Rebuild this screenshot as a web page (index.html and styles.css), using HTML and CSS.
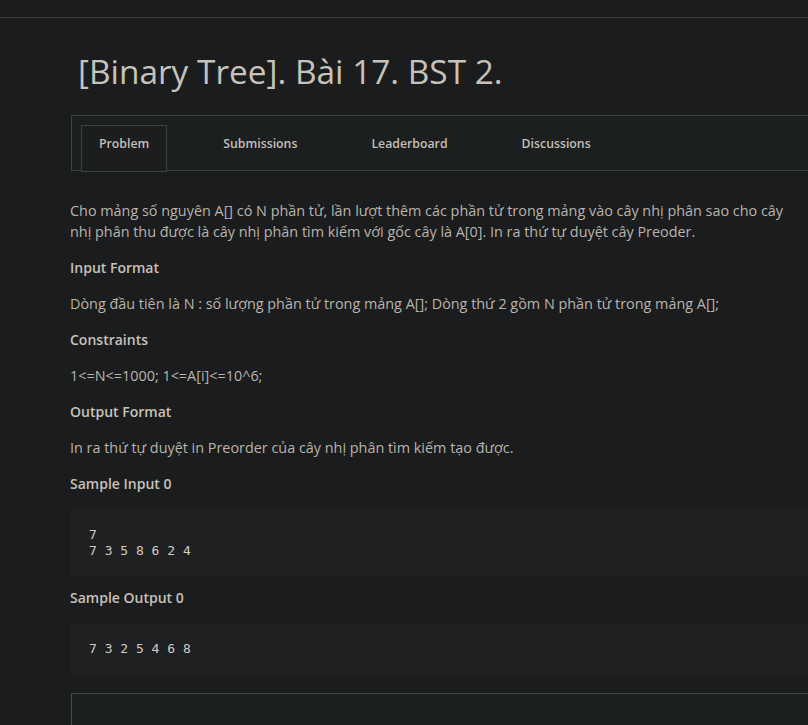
FILE: index.html
```html
<!DOCTYPE html>
<html lang="vi">
<head>
<meta charset="utf-8">
<title>[Binary Tree]. Bài 17. BST 2.</title>
<link rel="stylesheet" href="styles.css">
</head>
<body>
<div class="topbar"></div>
<main class="page">
  <h1 class="title">[Binary Tree]. Bài 17. BST 2.</h1>
  <nav class="tabs">
    <a class="tab active">Problem</a>
    <a class="tab">Submissions</a>
    <a class="tab">Leaderboard</a>
    <a class="tab">Discussions</a>
  </nav>
  <section class="statement">
    <p class="wrap">Cho mảng số nguyên A[] có N phần tử, lần lượt thêm các phần tử trong mảng vào cây nhị phân sao cho cây nhị phân thu được là cây nhị phân tìm kiếm với gốc cây là A[0]. In ra thứ tự duyệt cây Preoder.</p>
    <h3>Input Format</h3>
    <p>Dòng đầu tiên là N : số lượng phần tử trong mảng A[]; Dòng thứ 2 gồm N phần tử trong mảng A[];</p>
    <h3>Constraints</h3>
    <p>1&lt;=N&lt;=1000; 1&lt;=A[i]&lt;=10^6;</p>
    <h3>Output Format</h3>
    <p>In ra thứ tự duyệt in Preorder của cây nhị phân tìm kiếm tạo được.</p>
    <h3>Sample Input 0</h3>
    <pre class="code">7
7 3 5 8 6 2 4</pre>
    <h3>Sample Output 0</h3>
    <pre class="code last">7 3 2 5 4 6 8</pre>
  </section>
  <div class="editor"></div>
</main>
</body>
</html>
```
FILE: styles.css
```css
html, body {
  margin: 0;
  padding: 0;
  background: #1b1c1e;
  overflow: hidden;
}
body {
  font-family: "Open Sans", "Noto Sans", sans-serif;
  color: #b9b4ac;
  width: 808px;
  height: 725px;
}
.topbar {
  height: 17px;
  border-bottom: 1px solid #3c3d3f;
}
.page {
  margin-left: 70px;
  width: 800px;
}
.title {
  margin: 0;
  padding: 31px 0 0 8px;
  font-size: 33.4px;
  line-height: 44px;
  font-weight: 400;
  color: #c7c3bb;
  height: 66px;
}
.tabs {
  display: flex;
  gap: 38px;
  margin-left: 1px;
  padding: 9px 0 0 9px;
  box-sizing: border-box;
  height: 56px;
  background: #1c1f20;
  border: 1px solid #3e4142;
}
.tab {
  padding: 9px 17px 0;
  height: 47px;
  box-sizing: border-box;
  font-size: 12.3px;
  line-height: 17px;
  font-weight: 600;
  color: #c3bfb7;
  border: 1px solid transparent;
}
.tab.active {
  border-color: #3e4142;
  background: #1b1d1e;
}
.statement {
  padding-top: 29px;
}
.statement p, .statement h3 {
  margin: 0 0 15px 0;
  font-size: 14.4px;
  line-height: 21px;
}
.statement .wrap {
  width: 730px;
}
.statement h3 {
  font-size: 14px;
  font-weight: 600;
  color: #c6c2ba;
}
.code {
  margin: 0 0 10px 0;
  padding: 18px 19px;
  background: #1f2022;
  font-family: "DejaVu Sans Mono", monospace;
  font-size: 13px;
  line-height: 16px;
  color: #cfcbc4;
}
.code.last {
  margin-bottom: 18px;
}
.editor {
  margin-left: 1px;
  height: 60px;
  border: 1px solid #46494a;
  background: #1c1f20;
}
```
